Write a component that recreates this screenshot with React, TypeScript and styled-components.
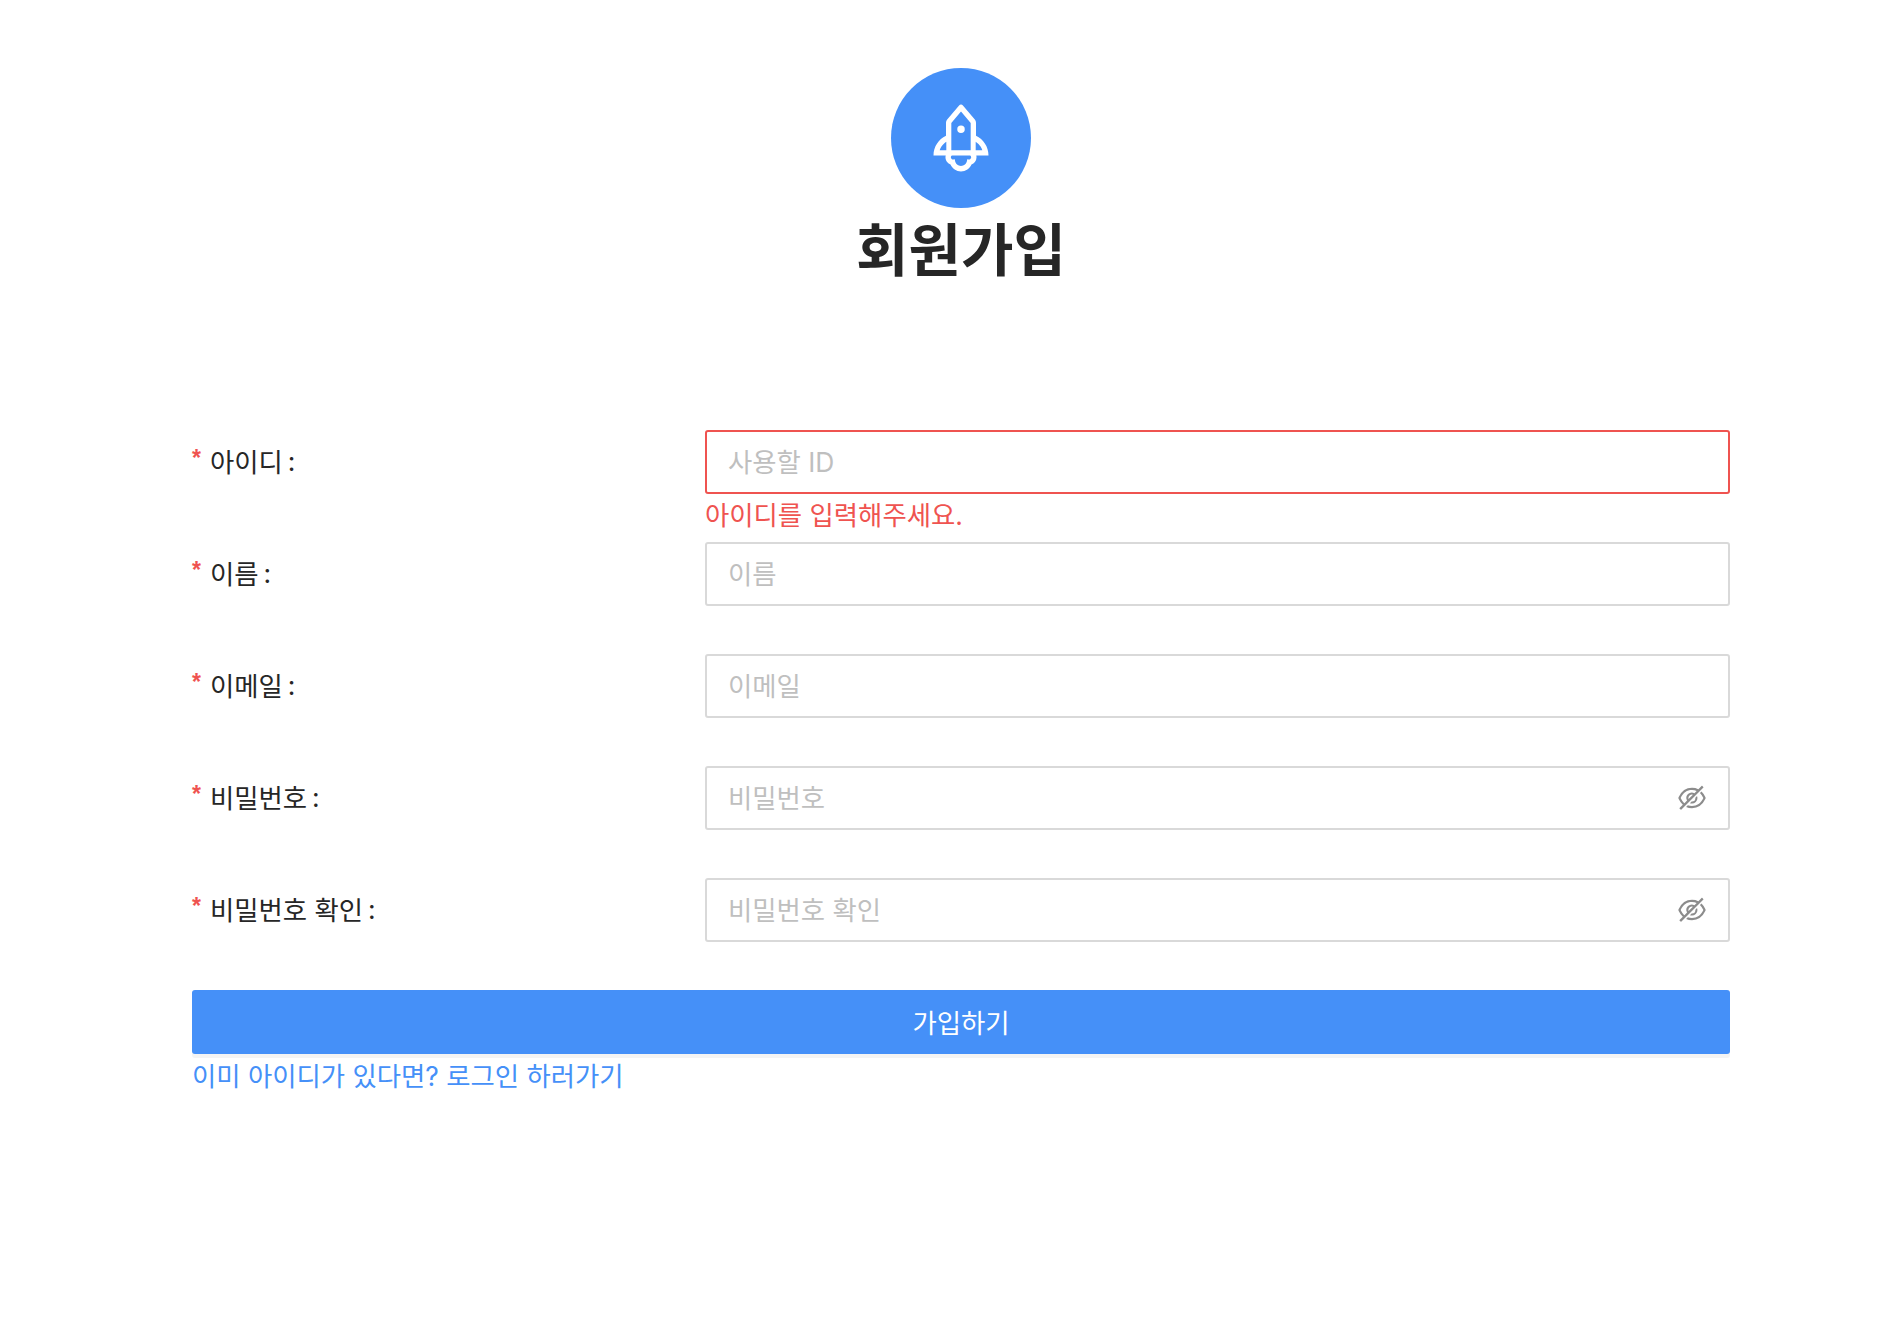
import React from "react";
import styled, { createGlobalStyle } from "styled-components";
import { AiOutlineRocket, AiOutlineEyeInvisible } from "react-icons/ai";

const Global = createGlobalStyle`
  html, body { margin: 0; padding: 0; background: #fff; }
  body { font-family: "Inter", "Noto Sans CJK KR", sans-serif; color: #262626; }
  * { box-sizing: border-box; }
`;

const Page = styled.div`
  width: 1899px;
  height: 1339px;
  padding: 68px 169px 0 192px;
  overflow: hidden;
  font-family: "Inter", "Noto Sans CJK KR", sans-serif;
`;
const Header = styled.header`
  display: flex;
  flex-direction: column;
  align-items: center;
  height: 362px;
`;
const Logo = styled.div`
  width: 140px;
  height: 140px;
  border-radius: 50%;
  background: #4590f8;
  color: #fff;
  display: flex;
  align-items: center;
  justify-content: center;
  flex: none;
`;
const Title = styled.h1`
  margin: 0;
  font-size: 57px;
  font-weight: 700;
  line-height: 85px;
  color: #262626;
`;
const Form = styled.form`
  display: flex;
  flex-direction: column;
`;
const Row = styled.div<{ $hasError?: boolean }>`
  display: grid;
  grid-template-columns: 513px 1025px;
  margin-bottom: ${(p) => (p.$hasError ? "8px" : "48px")};
`;
const Label = styled.label`
  display: flex;
  align-items: center;
  height: 61px;
  font-size: 26.4px;
  color: #262626;
`;
const Star = styled.span`
  color: #ef5350;
  font-family: "Liberation Sans", sans-serif;
  font-weight: 700;
  font-size: 23px;
  line-height: 1;
  margin-right: 9px;
  position: relative;
  top: -2px;
`;
const Colon = styled.span`
  margin-left: 5px;
`;
const InputBox = styled.div<{ $error?: boolean }>`
  height: 64px;
  display: flex;
  align-items: center;
  padding: 0 20px 0 21px;
  border: 2px solid ${(p) => (p.$error ? "#ef5350" : "#d9d9d9")};
  border-radius: 3px;
  background: #fff;
`;
const Input = styled.input`
  flex: 1;
  min-width: 0;
  border: 0;
  outline: 0;
  padding: 0;
  font-family: inherit;
  font-size: 26.4px;
  line-height: 38px;
  height: 38px;
  color: #262626;
  &::placeholder { color: #bfbfbf; opacity: 1; }
`;
const EyeButton = styled.span`
  display: flex;
  color: #8c8c8c;
  flex: none;
`;
const ErrorText = styled.div`
  height: 40px;
  font-size: 26.4px;
  line-height: 42px;
  color: #ef5350;
`;
const Submit = styled.button`
  display: block;
  width: 100%;
  height: 64px;
  border: 0;
  border-radius: 3px;
  background: #4590f8;
  color: #fff;
  font-family: inherit;
  font-size: 26.4px;
  box-shadow: 0 4px 0 rgba(0, 0, 0, 0.045);
  padding: 0 0 2px;
`;
const LoginLink = styled.a`
  display: block;
  font-size: 26.4px;
  line-height: 45px;
  color: #4590f8;
  text-decoration: none;
`;

const fields = [
  { label: "아이디", placeholder: "사용할 ID", error: "아이디를 입력해주세요." },
  { label: "이름", placeholder: "이름" },
  { label: "이메일", placeholder: "이메일" },
  { label: "비밀번호", placeholder: "비밀번호", secret: true },
  { label: "비밀번호 확인", placeholder: "비밀번호 확인", secret: true },
];

export default function App() {
  return (
    <Page>
      <Global />
      <Header>
        <Logo>
          <AiOutlineRocket size={80} />
        </Logo>
        <Title>회원가입</Title>
      </Header>
      <Form>
        {fields.map((f) => (
          <Row key={f.label} $hasError={!!f.error}>
            <Label>
              <Star>*</Star>
              {f.label}
              <Colon>:</Colon>
            </Label>
            <div>
              <InputBox $error={!!f.error}>
                <Input placeholder={f.placeholder} type="text" readOnly />
                {f.secret && (
                  <EyeButton>
                    <AiOutlineEyeInvisible size={32} />
                  </EyeButton>
                )}
              </InputBox>
              {f.error && <ErrorText>{f.error}</ErrorText>}
            </div>
          </Row>
        ))}
        <Submit type="button">가입하기</Submit>
        <LoginLink href="#">이미 아이디가 있다면? 로그인 하러가기</LoginLink>
      </Form>
    </Page>
  );
}
